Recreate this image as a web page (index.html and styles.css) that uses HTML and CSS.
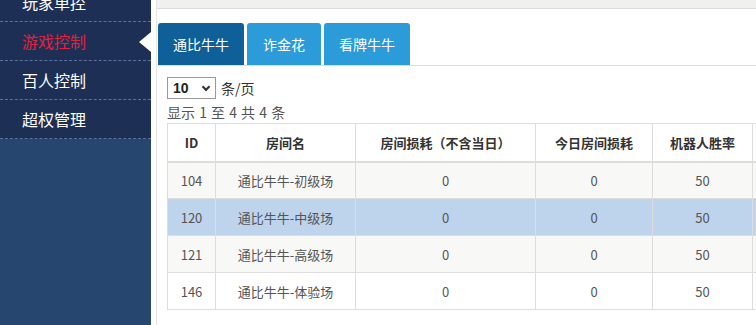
FILE: index.html
```html
<!DOCTYPE html>
<html lang="zh-CN">
<head>
    <meta charset="UTF-8">
    <title>游戏控制</title>
    <link rel="stylesheet" href="styles.css">
</head>
<body>

<!-- Sidebar -->
<div class="sidebar">
    <ul class="menu">
        <li class="menu-item">玩家单控</li>
        <li class="menu-item active">游戏控制</li>
        <li class="menu-item">百人控制</li>
        <li class="menu-item">超权管理</li>
    </ul>
</div>

<!-- Main -->
<div class="main">
    <div class="top-strip"></div>

    <div class="tabs">
        <div class="tab current">通比牛牛</div>
        <div class="tab">诈金花</div>
        <div class="tab">看牌牛牛</div>
    </div>

    <div class="panel">
        <div class="page-size">
            <div class="select">10 <span class="chevron"></span></div>
            <span>条/页</span>
        </div>
        <div class="info">显示 1 至 4 共 4 条</div>

        <table class="rooms">
            <thead>
                <tr>
                    <th class="c-id">ID</th>
                    <th class="c-name">房间名</th>
                    <th class="c-loss">房间损耗（不含当日）</th>
                    <th class="c-today">今日房间损耗</th>
                    <th class="c-rate">机器人胜率</th>
                    <th></th>
                </tr>
            </thead>
            <tbody>
                <tr class="odd"><td>104</td><td>通比牛牛-初级场</td><td>0</td><td>0</td><td>50</td><td></td></tr>
                <tr class="selected"><td>120</td><td>通比牛牛-中级场</td><td>0</td><td>0</td><td>50</td><td></td></tr>
                <tr class="odd"><td>121</td><td>通比牛牛-高级场</td><td>0</td><td>0</td><td>50</td><td></td></tr>
                <tr><td>146</td><td>通比牛牛-体验场</td><td>0</td><td>0</td><td>50</td><td></td></tr>
            </tbody>
        </table>
    </div>
</div>

</body>
</html>
```

FILE: styles.css
```css
* {
    box-sizing: border-box;
}
body {
    margin: 0;
    padding: 0;
    display: flex;
    height: 325px;
    overflow: hidden;
    background-color: #ffffff;
    font-family: "Noto Sans CJK SC", "Noto Sans", sans-serif;
}

/* Sidebar */
.sidebar {
    width: 151px;
    flex-shrink: 0;
    background-color: #27466f;
}
.menu {
    list-style: none;
    margin: -17px 0 0 0;
    padding: 0;
    background-color: #1e2f55;
}
.menu-item {
    position: relative;
    height: 39px;
    line-height: 38px;
    padding-left: 22px;
    font-size: 16px;
    color: #ffffff;
    border-bottom: 1px dashed #5d729b;
}
.menu-item.active {
    color: #e3223d;
}
/* little white arrow on the active item */
.menu-item.active::after {
    content: "";
    position: absolute;
    right: 0;
    top: 10px;
    border-top: 10px solid transparent;
    border-bottom: 10px solid transparent;
    border-right: 12px solid #ffffff;
}

/* Main area */
.main {
    flex: 1;
    margin-left: 5px;
    border-left: 1px solid #e6e6e6;
    min-width: 0;
}
.top-strip {
    height: 9px;
    background-color: #f0f1ef;
    border-bottom: 1px solid #dcdcdc;
}

/* Tabs */
.tabs {
    display: flex;
    gap: 3px;
    margin-top: 14px;
    padding-left: 1px;
    border-bottom: 1px solid #dddddd;
}
.tab {
    height: 42px;
    line-height: 42px;
    padding: 0 15px;
    font-size: 14px;
    color: #ffffff;
    background-color: #2b9bd9;
    border-radius: 3px 3px 0 0;
}
.tab.current {
    background-color: #0f5f98;
}
.tab:nth-child(2) {
    padding: 0 16px;
}

/* Panel */
.panel {
    padding: 11px 0 0 10px;
}
.page-size {
    display: flex;
    align-items: center;
    gap: 5px;
    font-size: 14px;
    color: #333333;
}
.select {
    display: flex;
    align-items: center;
    justify-content: space-between;
    width: 49px;
    height: 22px;
    padding: 0 6px 0 5px;
    border: 1px solid #999999;
    font-family: "Liberation Sans", sans-serif;
    font-weight: bold;
    font-size: 14px;
    color: #222222;
}
.chevron {
    width: 6px;
    height: 6px;
    border-right: 2px solid #333333;
    border-bottom: 2px solid #333333;
    transform: rotate(45deg);
    margin-top: -3px;
}
.info {
    margin-top: 4px;
    font-size: 14px;
    line-height: 18px;
    color: #555555;
    word-spacing: 1px;
}

/* Table */
.rooms {
    margin-top: 2px;
    border-collapse: collapse;
    font-size: 13px;
    color: #555555;
    width: 620px;
}
.rooms th,
.rooms td {
    border: 1px solid #dddddd;
    text-align: center;
    padding: 0 8px;
}
.rooms th {
    height: 38px;
    font-weight: bold;
    color: #333333;
    border-bottom: 2px solid #dddddd;
}
.rooms td {
    height: 37px;
}
.c-id { width: 48px; }
.c-name { width: 140px; }
.c-loss { width: 180px; }
.c-today { width: 117px; }
.c-rate { width: 100px; }

.rooms tr.odd td {
    background-color: #f8f8f7;
}
.rooms tr.selected td {
    background-color: #bed3ec;
}
```
